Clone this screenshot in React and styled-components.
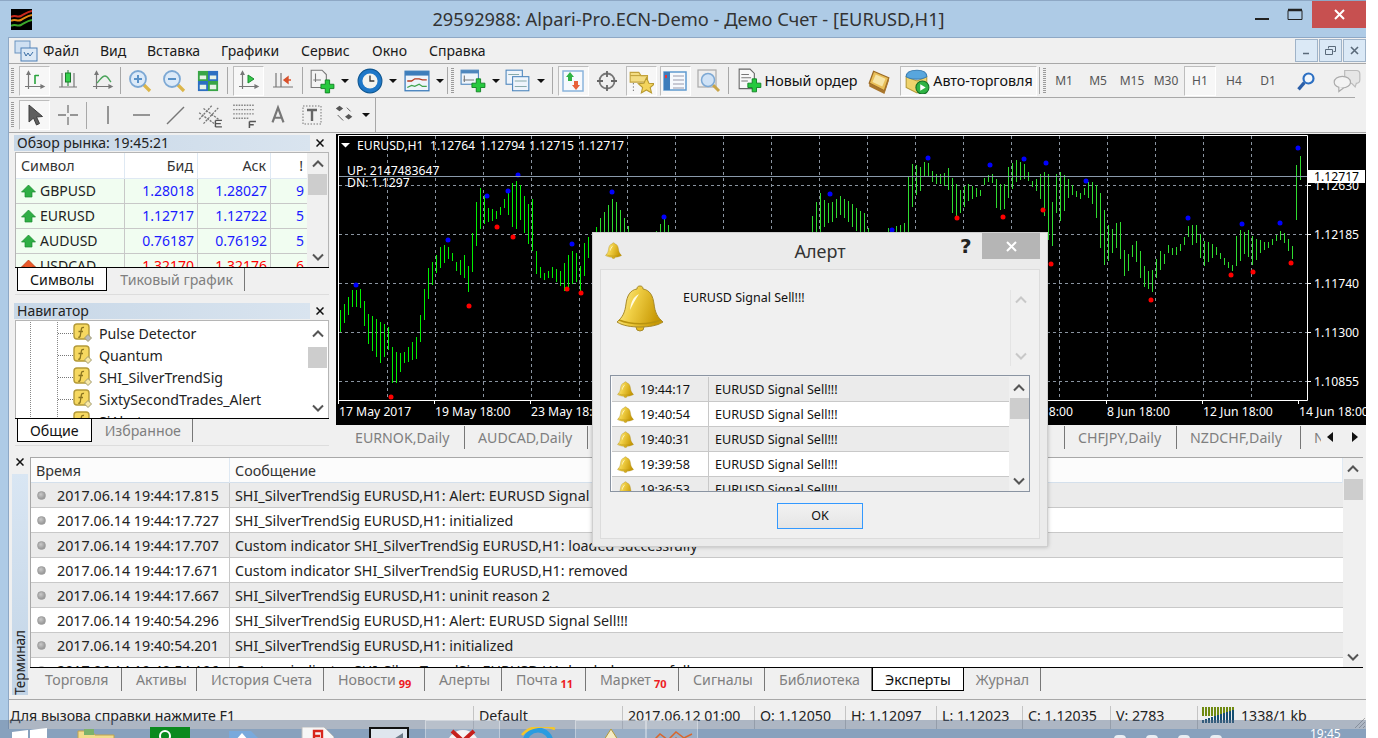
import React from "react";
import styled, { createGlobalStyle } from "styled-components";

const FONT = `"Noto Sans", "Open Sans", "Liberation Sans", sans-serif`;

const Global = createGlobalStyle`
  html, body { margin: 0; padding: 0; background: #fff; }
  body { font-family: ${FONT}; font-size: 14px; color: #111; }
`;

const Page = styled.div`
  position: relative;
  width: 1378px;
  height: 738px;
  overflow: hidden;
  background: #fff;
`;
const Win = styled.div`
  width: 1366px;
  height: 738px;
  box-sizing: border-box;
  padding: 0 0 9px 8px;
  background: #aecbe6;
  display: flex;
  flex-direction: column;
`;
const TitleBar = styled.div`
  height: 37px;
  flex: none;
  margin-left: -8px;
  border-top: 1px solid #8ea8c5;
  box-sizing: border-box;
  position: relative;
  display: flex;
  align-items: center;
  justify-content: center;
`;
const TitleText = styled.div`
  font-size: 18.25px;
  color: #333;
  margin: -1px 0 0 11px;
`;
const Logo = styled.svg`
  position: absolute;
  left: 11px;
  top: 8px;
`;
const WinButtons = styled.div`
  position: absolute;
  right: 0;
  top: 0;
  height: 27px;
  display: flex;
`;
const WinBtn = styled.div`
  width: ${(p) => p.w}px;
  height: 27px;
  margin-right: ${(p) => p.mr || 0}px;
  display: flex;
  align-items: center;
  justify-content: center;
  background: ${(p) => (p.close ? "#c75050" : "transparent")};
`;
const Client = styled.div`
  flex: 1;
  min-height: 0;
  background: #f0f0f0;
  border-top: 1px solid #8ea8c5;
  border-left: 1px solid #8ea8c5;
  display: flex;
  flex-direction: column;
`;
const MenuBar = styled.div`
  height: 25px;
  flex: none;
  display: flex;
  align-items: center;
  position: relative;
  padding-left: 5px;
`;
const MenuItem = styled.div`
  width: ${(p) => p.w}px;
  font-size: 14px;
  color: #1a1a1a;
`;
const MdiButtons = styled.div`
  position: absolute;
  right: 0;
  top: 1px;
  display: flex;
  gap: 1px;
`;
const MdiBtn = styled.div`
  width: 21px;
  height: 21px;
  border: 1px solid #9fb3c8;
  background: #dbe9f6;
  display: flex;
  align-items: center;
  justify-content: center;
`;
const ToolRow = styled.div`
  height: 33px;
  flex: none;
  border-top: 1px solid #a8a8a8;
  display: flex;
  align-items: center;
  margin-right: ${(p) => p.mr || 0}px;
`;
const ToolRow2 = styled(ToolRow)`
  height: 34px;
`;
const ToolLimit = styled.div`
  width: 366px;
  flex: none;
  height: 100%;
  display: flex;
  align-items: center;
  border-right: 1px solid #a8a8a8;
`;
const Grip = styled.div`
  width: 3px;
  height: 26px;
  margin: 0 ${(p) => p.mr ?? 5}px 0 ${(p) => p.ml ?? 2}px;
  flex: none;
  background: repeating-linear-gradient(#9a9a9a 0 1px, transparent 1px 2px);
`;
const Btn = styled.div`
  width: ${(p) => p.w || 31}px;
  height: 30px;
  flex: none;
  margin: 0 ${(p) => p.mx ?? 1.5}px;
  box-sizing: border-box;
  display: flex;
  align-items: center;
  justify-content: center;
  gap: ${(p) => p.gap ?? 4}px;
  font-size: 14.3px;
  white-space: nowrap;
  color: #111;
  border: 1px solid ${(p) => (p.active ? "#fff" : "transparent")};
  border-left-color: ${(p) => (p.active ? "#bdbdbd" : "transparent")};
  border-top-color: ${(p) => (p.active ? "#bdbdbd" : "transparent")};
  background: ${(p) => (p.active ? "#f7f7f7" : "transparent")};
`;
const TimeBtn = styled(Btn)`
  font-size: 12px;
  color: #555;
`;
const Drop = styled.div`
  width: 0;
  height: 0;
  border: 4px solid transparent;
  border-top: 4px solid #111;
  border-bottom: 0;
  margin-left: ${(p) => p.ml ?? 2}px;
`;
const Sep = styled.div`
  width: 1px;
  height: 27px;
  flex: none;
  background: #a8a8a8;
  margin: 0 ${(p) => p.r ?? 2}px 0 ${(p) => p.l ?? 2}px;
`;
const Main = styled.div`
  height: 317px;
  flex: none;
  display: flex;
  border-top: 1px solid #a8a8a8;
  box-sizing: border-box;
`;
const Dock = styled.div`
  width: 327px;
  flex: none;
  box-sizing: border-box;
  padding: 2px 7px 0 6px;
  display: flex;
  flex-direction: column;
  gap: 8px;
`;
const Panel = styled.div`
  height: ${(p) => p.h}px;
  flex: none;
  display: flex;
  flex-direction: column;
`;
const PanelHead = styled.div`
  height: 17px;
  flex: none;
  display: flex;
  align-items: flex-start;
  margin-left: -1px;
`;
const PanelTitle = styled.div`
  width: 296px;
  height: 16px;
  line-height: 15px;
  padding-left: 3px;
  box-sizing: border-box;
  font-size: 14px;
  color: #222;
  background: linear-gradient(90deg, #c7d7e7, #d9e4ef);
  white-space: nowrap;
`;
const CloseX = styled.div`
  width: 19px;
  height: 16px;
  flex: none;
  display: flex;
  align-items: center;
  justify-content: center;
`;
const PanelBody = styled.div`
  flex: 1;
  min-height: 0;
  display: flex;
  border: 1px solid #b5b5b5;
  border-bottom: 0;
  overflow: hidden;
  background: #fff;
`;
const PanelList = styled.div`
  flex: 1;
  min-width: 0;
  overflow: hidden;
  padding-top: ${(p) => p.pt || 0}px;
`;
const Scroll = styled.div`
  width: ${(p) => p.w || 21}px;
  flex: none;
  background: ${(p) => p.bg || "#f0f0f0"};
  display: flex;
  flex-direction: column;
  align-items: center;
  overflow: hidden;
`;
const ScrollCap = styled.div`
  height: ${(p) => p.h}px;
  width: 100%;
  flex: none;
  display: flex;
  align-items: center;
  justify-content: center;
`;
const Thumb = styled.div`
  width: 19px;
  height: 21px;
  flex: none;
  background: #cdcdcd;
`;
const Spacer = styled.div`
  flex: 1;
`;
const MarketGrid = styled.div`
  display: grid;
  grid-template-columns: 109px 73px 73px 37px;
`;
const HeadCell = styled.div`
  height: 25px;
  line-height: 26px;
  border-right: 1px solid #dfe9f3;
  border-bottom: 1px solid #dfe9f3;
  padding: 0 ${(p) => (p.right ? 4 : 0)}px 0 ${(p) => (p.right ? 0 : 5)}px;
  text-align: ${(p) => (p.right ? "right" : "left")};
  font-size: 14.2px;
  color: #333;
`;
const MarketCell = styled.div`
  height: 24px;
  line-height: 24px;
  background: #f1fdf1;
  border-right: 1px solid #c8c8c8;
  border-bottom: 1px solid #c8c8c8;
  padding-right: 3px;
  display: flex;
  align-items: center;
  justify-content: ${(p) => (p.sym ? "flex-start" : "flex-end")};
  gap: 4px;
  padding-left: ${(p) => (p.sym ? 5 : 0)}px;
  font-size: 14px;
  color: ${(p) => p.c || "#222"};
`;
const TabStrip = styled.div`
  height: ${(p) => p.h || 28}px;
  flex: none;
  border-top: 1px solid #000;
  box-sizing: border-box;
  display: flex;
  align-items: flex-start;
  padding-left: ${(p) => p.pl ?? 2}px;
  border-bottom: ${(p) => (p.line ? "1px solid #ddd" : "0")};
`;
const Tab = styled.div`
  height: 23px;
  line-height: 24px;
  flex: none;
  padding: 0 ${(p) => (p.active ? 12 : p.pr ?? 11)}px 0 ${(p) => (p.active ? 12 : p.pl ?? 11)}px;
  font-size: 14.2px;
  white-space: nowrap;
  overflow: hidden;
  box-sizing: border-box;
  color: ${(p) => (p.active ? "#111" : "#7f7f7f")};
  background: ${(p) => (p.active ? "#fff" : "transparent")};
  border: ${(p) => (p.active ? "1px solid #000" : "0")};
  border-top: 0;
  border-right: ${(p) => (p.active ? "1px solid #000" : p.flat ? "0" : "1px solid #777")};
  width: ${(p) => (p.w ? p.w + "px" : "auto")};
`;
const TabCount = styled.span`
  color: #ed1c24;
  font-size: 11px;
  font-weight: 700;
  margin-left: 3px;
  position: relative;
  top: 3px;
`;
const NavItem = styled.div`
  height: 22px;
  display: flex;
  align-items: center;
  font-size: 14.2px;
  color: #222;
  white-space: nowrap;
  background-image:
    linear-gradient(#888 50%, transparent 50%),
    linear-gradient(#888 50%, transparent 50%);
  background-size: 1px 2px, 1px 2px;
  background-repeat: repeat-y, repeat-y;
  background-position: 14px 0, 41px 0;
`;
const TreeLine = styled.div`
  width: 15px;
  margin-left: 42px;
  flex: none;
  border-top: 1px dotted #777;
`;
const NavIcon = styled.svg`
  margin-right: 6px;
  flex: none;
`;
const ChartPane = styled.div`
  flex: 1;
  min-width: 0;
  display: flex;
  flex-direction: column;
  padding-top: 1px;
`;
const ChartSvg = styled.svg`
  display: block;
  flex: none;
  background: #000;
  text {
    font-family: ${FONT};
    font-size: 12.2px;
    fill: #fff;
  }
`;
const ChartTabs = styled.div`
  flex: 1;
  display: flex;
  align-items: flex-start;
  padding: 1px 0 0 6px;
  position: relative;
  overflow: hidden;
`;
const ChartTabArrows = styled.div`
  position: absolute;
  right: 0;
  top: 0;
  bottom: 0;
  width: 45px;
  box-sizing: border-box;
  padding-left: 6px;
  background: #f0f0f0;
  display: flex;
  align-items: center;
  gap: 19px;
`;
const Terminal = styled.div`
  height: 250px;
  flex: none;
  display: flex;
`;
const TermSide = styled.div`
  width: 21px;
  flex: none;
  display: flex;
  flex-direction: column;
  align-items: center;
  padding-top: 5px;
  box-sizing: border-box;
`;
const TermStrip = styled.div`
  width: 16px;
  margin: 4px 0 4px;
  flex: 1;
  background: linear-gradient(#d9e6f3, #c2d4e6);
  display: flex;
  align-items: flex-end;
  justify-content: center;
`;
const TermLabel = styled.div`
  writing-mode: vertical-rl;
  transform: rotate(180deg);
  font-size: 13.5px;
  line-height: 16px;
  color: #222;
`;
const TermMain = styled.div`
  flex: 1;
  min-width: 0;
  display: flex;
  flex-direction: column;
  padding: 8px 3px 0 0;
`;
const TermTable = styled.div`
  height: 210px;
  flex: none;
  display: flex;
  border-top: 1px solid #a8a8a8;
  border-left: 1px solid #a8a8a8;
  box-sizing: border-box;
  overflow: hidden;
`;
const TermList = styled.div`
  flex: 1;
  min-width: 0;
  background: #fff;
`;
const TermHead = styled.div`
  height: 25px;
  box-sizing: border-box;
  display: grid;
  grid-template-columns: 199px 1fr;
  background: #fcfcfc;
  border-bottom: 1px solid #d4e0ec;
  font-size: 14.3px;
  line-height: 25px;
  color: #333;
`;
const TermHeadCell = styled.div`
  padding-left: ${(p) => p.pl}px;
  border-right: 1px solid #dfe9f3;
`;
const TermRow = styled.div`
  height: 25px;
  box-sizing: border-box;
  display: grid;
  grid-template-columns: 199px 1fr;
  background: ${(p) => (p.alt ? "#ebebeb" : "#fff")};
  border-bottom: 1px solid #c8c8c8;
  font-size: 14.3px;
  line-height: 25px;
  color: #222;
`;
const TermTime = styled.div`
  display: flex;
  align-items: center;
  gap: 11px;
  padding-left: 6px;
  border-right: 1px solid #c8c8c8;
`;
const Dot = styled.span`
  width: 9px;
  height: 9px;
  border-radius: 50%;
  flex: none;
  background: radial-gradient(circle at 40% 35%, #c9c9c9, #868686);
  border: 1px solid #a0a0a0;
  box-sizing: border-box;
`;
const TermMsg = styled.div`
  padding-left: 5px;
  white-space: nowrap;
`;
const Status = styled.div`
  flex: 1;
  border-top: 1px solid #a8a8a8;
  display: flex;
  padding-top: 6px;
  box-sizing: border-box;
  overflow: hidden;
  font-size: 14.2px;
  color: #222;
  position: relative;
`;
const StatusCell = styled.div`
  width: ${(p) => p.w}px;
  flex: none;
  height: 24px;
  line-height: 20px;
  box-sizing: border-box;
  padding-left: ${(p) => p.pl ?? 5}px;
  border-right: ${(p) => (p.last ? 0 : "1px solid #c4c4c4")};
  display: flex;
  gap: 5px;
  white-space: nowrap;
`;
const SizeGrip = styled.svg`
  position: absolute;
  right: 0;
  bottom: 0;
`;
const Dialog = styled.div`
  position: absolute;
  left: 592px;
  top: 232px;
  width: 456px;
  height: 315px;
  box-sizing: border-box;
  background: #ebebeb;
  border: 1px solid #cfcfcf;
  box-shadow: 0 0 4px rgba(0, 0, 0, 0.25);
  display: flex;
  flex-direction: column;
  padding: 0 7px 7px;
`;
const DialogHead = styled.div`
  height: 36px;
  flex: none;
  display: flex;
  align-items: flex-start;
  position: relative;
`;
const DialogTitle = styled.div`
  position: absolute;
  left: 0;
  right: 0;
  top: 6px;
  text-align: center;
  font-size: 18px;
  color: #333;
`;
const DialogBell = styled.div`
  margin: 9px 0 0 5px;
`;
const Help = styled.div`
  position: absolute;
  left: 360px;
  top: 1px;
  font: 700 20px "DejaVu Sans", sans-serif;
  color: #222;
`;
const DialogClose = styled.div`
  position: absolute;
  right: 0;
  top: 0;
  width: 58px;
  height: 26px;
  background: #b5b5b5;
  color: #fff;
  display: flex;
  align-items: center;
  justify-content: center;
`;
const DialogBody = styled.div`
  flex: 1;
  border: 1px solid #dcdcdc;
  background: #f0f0f0;
  display: flex;
  flex-direction: column;
  padding: 0 9px;
  min-height: 0;
`;
const DialogTop = styled.div`
  height: 105px;
  flex: none;
  display: flex;
  font-size: 12.5px;
  color: #111;
`;
const BigBell = styled.div`
  margin: 14px 0 0 6px;
  width: 67px;
  flex: none;
`;
const DialogMsg = styled.div`
  flex: 1;
  padding-top: 19px;
`;
const MsgScroll = styled.div`
  width: 20px;
  height: 76px;
  margin: 20px 0 0;
  border-left: 1px solid #e4e4e4;
  display: flex;
  flex-direction: column;
  align-items: center;
  justify-content: space-between;
  padding: 6px 0;
  box-sizing: border-box;
`;
const AlertBox = styled.div`
  height: 117px;
  flex: none;
  border: 1px solid #8a94a2;
  padding-top: 1px;
  box-sizing: border-box;
  display: flex;
  overflow: hidden;
  background: #f0f0f0;
`;
const AlertList = styled.div`
  flex: 1;
  min-width: 0;
  background: #fff;
  padding-left: 1px;
`;
const AlertRow = styled.div`
  height: 25px;
  box-sizing: border-box;
  display: grid;
  grid-template-columns: 97px 1fr;
  background: ${(p) => (p.alt ? "#ebebeb" : "#fff")};
  border-bottom: 1px solid #c8c8c8;
  font-size: 12.6px;
  line-height: 25px;
  color: #111;
`;
const AlertTime = styled.div`
  display: flex;
  align-items: center;
  gap: 6px;
  padding-left: 5px;
  border-right: 1px solid #c8c8c8;
`;
const AlertMsg = styled.div`
  padding-left: 6px;
`;
const OkRow = styled.div`
  display: flex;
  justify-content: center;
  padding-top: 11px;
`;
const OkBtn = styled.div`
  width: 86px;
  height: 26px;
  box-sizing: border-box;
  border: 1px solid #3399ff;
  background: linear-gradient(#f2f2f2, #e5e5e5);
  font-size: 12.5px;
  line-height: 24px;
  text-align: center;
  color: #111;
`;
const Taskbar = styled.div`
  position: absolute;
  left: 0;
  top: 720px;
  width: 1366px;
  height: 18px;
  background: rgba(90, 110, 140, 0.45);
  display: flex;
  overflow: hidden;
`;
const TaskSlot = styled.div`
  width: ${(p) => p.w}px;
  flex: none;
  height: 40px;
  box-sizing: border-box;
  padding-top: 7px;
  display: flex;
  justify-content: center;
  border: ${(p) => (p.on ? "1px solid rgba(255,255,255,.35)" : "0")};
  background: ${(p) => (p.on ? "rgba(255,255,255,.14)" : "transparent")};
`;
const Tray = styled.div`
  position: absolute;
  left: 1114px;
  top: 15px;
  display: flex;
  gap: 20px;
`;
const TrayDot = styled.div`
  width: 12px;
  height: 10px;
  border-radius: 4px 4px 0 0;
  background: #e8edf2;
`;
const Clock = styled.div`
  position: absolute;
  left: 1310px;
  top: 5px;
  font-size: 12px;
  color: #fff;
`;

/* ---------- icons ---------- */
const I = ({ s = 24, children, ...r }) => (
  <svg width={s} height={s} viewBox="0 0 24 24" fill="none" {...r}>
    {children}
  </svg>
);
const Axes = () => (
  <path d="M6.500 4v16M3 17.500h17M6.500 2.500 5 5.500h3zM22 17.500l-3-1.500v3z" stroke="#777" strokeWidth="1.200" fill="#777" />
);
const Plus = ({ x = 12, y = 12 }) => (
  <path
    transform={`translate(${x} ${y})`}
    d="M4 0h4v4h4v4H8v4H4V8H0V4h4z"
    fill="#27c93f"
    stroke="#0b7d1e"
    strokeWidth=".8"
  />
);
const Chevron = ({ down, c = "#555" }) => (
  <svg width="12" height="8" viewBox="0 0 12 8" fill="none">
    <path d={down ? "M1 1.500 6 6.500l5-5" : "M1 6.500 6 1.500l5 5"} stroke={c} strokeWidth="2" />
  </svg>
);
const Cross = () => (
  <svg width="8" height="8" viewBox="0 0 8 8">
    <path d="m.5.5 7 7M7.500.5l-7 7" stroke="#111" strokeWidth="1.500" />
  </svg>
);
const Bell = ({ s = 18 }) => (
  <svg width={s} height={s} viewBox="0 0 48 48" style={{ flex: "none" }}>
    <defs>
      <linearGradient id="bellG" x1="0" y1="0" x2="1" y2="0.3">
        <stop offset="0" stopColor="#fff3b0" />
        <stop offset=".45" stopColor="#f0cf45" />
        <stop offset="1" stopColor="#c99a06" />
      </linearGradient>
    </defs>
    <circle cx="24" cy="43" r="4" fill="#e5b91d" stroke="#a78a2a" strokeWidth="1" />
    <path
      d="M24 2c2 0 3 1 3 3 7 1 10 7 11 15 1 8 3 13 9 18-6 4-15 5-23 5S7 42 1 38c6-5 8-10 9-18 1-8 4-14 11-15 0-2 1-3 3-3z"
      fill="url(#bellG)"
      stroke="#a78a2a"
      strokeWidth="1"
    />
    <path d="M3 36c12 5 30 5 42 0" stroke="#b8930f" strokeWidth="1.400" fill="none" />
    <path d="M14 26c1-8 3-13 9-16-4 6-6 10-9 16z" fill="#fffbe0" />
  </svg>
);
const ArrowUp = () => (
  <svg width="15" height="14" viewBox="0 0 15 14" style={{ flex: "none" }}>
    <path d="M7.500 1 14.500 8H11v5H4V8H.5z" fill="#2fae45" stroke="#1b8a2e" strokeWidth=".7" />
  </svg>
);
const ArrowRed = () => (
  <svg width="15" height="14" viewBox="0 0 15 14" style={{ flex: "none" }}>
    <path d="M7.500 1 14.500 8H11v5H4V8H.5z" fill="#ea5a2a" stroke="#b23a12" strokeWidth=".7" />
  </svg>
);
const FuncIcon = ({ c = "#f6d860", d = "#f8e9a8" }) => (
  <NavIcon width="20" height="20" viewBox="0 0 20 20">
    <rect x="1" y="1" width="15" height="15" rx="3" fill={c} stroke="#b49a38" strokeWidth="1.400" />
    <path d="M11 4.500C9 4 8.500 5 8.200 7l-1 6c-.3 1.300-1 1.500-2 1M5.500 8.500h4.500" stroke="#8a7420" strokeWidth="1.300" fill="none" />
    <path d="M15 11.500l3.500 3.500-3.500 3.500-3.500-3.500z" fill={d} stroke="#a09a70" />
  </NavIcon>
);

const tools = {
  bars: (
    <I>
      <Axes />
      <path d="M13 15V6M13 6.500h4" stroke="#2aa43e" strokeWidth="1.600" />
    </I>
  ),
  candle: (
    <I>
      <path d="M6 4v14M3 18h18M18 4v14" stroke="#777" strokeWidth="1.200" />
      <path d="M12 1v16" stroke="#197a2a" />
      <rect x="9.500" y="4" width="5" height="9" fill="#35d04d" stroke="#197a2a" />
    </I>
  ),
  line: (
    <I>
      <Axes />
      <path d="M7 14c3-3 5-7 8-7s4 4 6 6" stroke="#4aa35a" strokeWidth="1.400" />
    </I>
  ),
  zoomIn: (
    <I s={24}>
      <path d="m15 15 7 7" stroke="#dcb64a" strokeWidth="3.200" />
      <circle cx="10" cy="10" r="8" fill="#dceaf8" stroke="#7ca8d4" strokeWidth="1.800" />
      <path d="M6 10h8M10 6v8" stroke="#5a92c8" strokeWidth="2" />
    </I>
  ),
  zoomOut: (
    <I s={24}>
      <path d="m15 15 7 7" stroke="#dcb64a" strokeWidth="3.200" />
      <circle cx="10" cy="10" r="8" fill="#dceaf8" stroke="#7ca8d4" strokeWidth="1.800" />
      <path d="M6 10h8" stroke="#5a92c8" strokeWidth="2" />
    </I>
  ),
  grid: (
    <I s={22}>
      <rect x="1" y="1" width="11" height="11" fill="#39a546" />
      <rect x="12" y="1" width="11" height="11" fill="#2c6fc2" />
      <rect x="1" y="12" width="11" height="11" fill="#2c6fc2" />
      <rect x="12" y="12" width="11" height="11" fill="#39a546" />
      <path d="M3 6h7v4H3zM14 6h7v4h-7zM3 16h7v5H3zM14 16h7v5h-7z" fill="#e6f2e6" />
    </I>
  ),
  play: (
    <I>
      <Axes />
      <path d="M12 6v8l6-4z" fill="#35c94c" stroke="#1b8a2e" />
    </I>
  ),
  shift: (
    <I>
      <path d="M5 4v14M2 18h20M10 4v14" stroke="#777" strokeWidth="1.200" />
      <path d="M13 11h7M13 11l4-3v6z" stroke="#d8502a" strokeWidth="1.400" fill="#d8502a" />
    </I>
  ),
  newChart: (
    <I s={26}>
      <path d="M2 2h10l4 4v12H2z" fill="#f4f4f4" stroke="#777" />
      <path d="M6 5v8M4 11h7" stroke="#777" />
      <Plus x={11} y={11} />
    </I>
  ),
  clock: (
    <I s={26}>
      <circle cx="12" cy="12" r="11" fill="#1e78c8" stroke="#0f568f" />
      <circle cx="12" cy="12" r="7" fill="#f4f4ee" />
      <path d="M12 7v5h4" stroke="#333" strokeWidth="1.200" />
    </I>
  ),
  template: (
    <I s={26}>
      <rect x="1" y="3" width="22" height="18" fill="#eef4fb" stroke="#3d7dbb" strokeWidth="1.200" />
      <rect x="1" y="3" width="22" height="4" fill="#3d7dbb" />
      <path d="M3 12h4l3-2h4l3 1h4" stroke="#b5391e" strokeWidth="1.200" />
      <path d="M3 18l4-2 3 1 4-2 3 2h4" stroke="#3ea34c" strokeWidth="1.200" />
    </I>
  ),
  addWin: (
    <I s={26}>
      <rect x="1" y="2" width="16" height="13" fill="#eef4fb" stroke="#4d86bd" />
      <rect x="1" y="2" width="16" height="3" fill="#4d86bd" />
      <path d="M4 7v6M3 11h10" stroke="#777" />
      <Plus x={11} y={10} />
    </I>
  ),
  profiles: (
    <I s={26}>
      <rect x="1" y="2" width="15" height="13" fill="#eef4fb" stroke="#4d86bd" />
      <rect x="7" y="8" width="15" height="13" fill="#eef4fb" stroke="#4d86bd" />
      <path d="M3 6h10M9 12h11M9 17h11" stroke="#8aa" />
    </I>
  ),
  updown: (
    <I s={24}>
      <rect x="2" y="2" width="20" height="20" fill="#f6f9fd" stroke="#8ab4dc" strokeWidth="1.500" />
      <path d="M9 3l4 5h-2v4H7V8H5z" fill="#2fb344" />
      <path d="M15 21l-4-5h2v-4h4v4h2z" fill="#e8623a" />
    </I>
  ),
  target: (
    <I s={24}>
      <circle cx="12" cy="12" r="7.500" stroke="#777" strokeWidth="1.800" />
      <path d="M12 2v6M12 16v6M2 12h6M16 12h6" stroke="#666" strokeWidth="1.800" />
    </I>
  ),
  star: (
    <I s={26}>
      <path d="M2 4h8l2 3h6v6H2z" fill="#f3dc82" stroke="#c2a23c" />
      <path d="M2 7h16" stroke="#c2a23c" />
      <path d="M5 14v8" stroke="#555" strokeDasharray="1 2" />
      <path d="m17 9 2.300 5 5.200.5-4 3.500 1.200 5-4.700-2.700-4.700 2.700 1.200-5-4-3.500 5.200-.5z" fill="#f3d45c" stroke="#b89a30" />
    </I>
  ),
  list: (
    <I s={24}>
      <rect x="1" y="3" width="22" height="18" fill="#f6f9fd" stroke="#5f9ad0" strokeWidth="1.500" />
      <rect x="1" y="3" width="6" height="18" fill="#3d7dbb" />
      <path d="M10 7h11M10 11h11M10 15h11M10 19h11" stroke="#99a" />
      <path d="M3 6v3" stroke="#e33" strokeWidth="2" />
    </I>
  ),
  search: (
    <I s={24}>
      <rect x="1" y="1" width="18" height="17" fill="#eee" stroke="#aaa" strokeWidth="1.200" />
      <path d="m16 16 6 6" stroke="#c9a548" strokeWidth="3" />
      <circle cx="11" cy="11" r="6.500" fill="#cfe2f6" stroke="#7ca8d4" strokeWidth="1.500" />
    </I>
  ),
  order: (
    <I s={26}>
      <path d="M2 1h10l4 4v14H2z" fill="#f8f8f8" stroke="#666" />
      <path d="M4 6h7M4 9h9M4 12h6" stroke="#777" />
      <Plus x={10} y={10} />
    </I>
  ),
  book: (
    <I s={26}>
      <path d="M7 3 21 9 17 21 3 14z" fill="#e9bf58" stroke="#9b6a24" strokeWidth="1.200" />
      <path d="M9 6l9 4-3 7-9-4z" fill="#f6e5a8" />
      <path d="M3 14l14 7 4-12v3l-4 12L3 17z" fill="#a9762c" />
    </I>
  ),
  auto: (
    <I s={26}>
      <path d="M2 8l10 4 9-4v11l-9 4-10-5z" fill="#efd36c" stroke="#b49a38" />
      <path d="M2 8c0-4 4-6 10-6s9 2 9 6c-4 3-15 3-19 0z" fill="#58a6dd" stroke="#3c7fb3" />
      <circle cx="17" cy="18" r="6" fill="#2fb344" stroke="#136e25" />
      <path d="M15 15v6l5-3z" fill="#fff" />
    </I>
  ),
  find: (
    <I s={20}>
      <path d="M3 22l7-8" stroke="#2c5fa8" strokeWidth="4" />
      <circle cx="15" cy="9" r="6" fill="#f2f7fc" stroke="#2c6fc2" strokeWidth="2.600" />
    </I>
  ),
  chat: (
    <I s={28}>
      <path d="M10 3h10a3 3 0 0 1 3 3v5a3 3 0 0 1-3 3l-1 3-3-3h-6z" fill="#e6e6e6" stroke="#bbb" />
      <ellipse cx="8" cy="13" rx="7" ry="5" fill="#f3f3f3" stroke="#aaa" />
      <path d="M5 17v4l4-3" fill="#f3f3f3" stroke="#aaa" />
    </I>
  ),
  cursor: (
    <I s={24}>
      <path d="M7 2v17l4.500-4 3 7 3-1.500-3-6.500 6-.5z" fill="#5f5f5f" stroke="#3f3f3f" />
    </I>
  ),
  cross: (
    <I>
      <path d="M12 2v8M12 14v8M2 12h8M14 12h8" stroke="#777" strokeWidth="1.300" />
    </I>
  ),
  vline: (
    <I>
      <path d="M12 3v18" stroke="#777" strokeWidth="1.500" />
    </I>
  ),
  hline: (
    <I>
      <path d="M3 12h17" stroke="#777" strokeWidth="1.500" />
    </I>
  ),
  diag: (
    <I>
      <path d="M3 21 20 4" stroke="#777" strokeWidth="1.500" />
    </I>
  ),
  channel: (
    <I s={26}>
      <path d="M2 16 14 3M6 20 20 5M2 10l14 10M6 6l14 10" stroke="#777" strokeWidth="1.200" strokeDasharray="2 1" />
      <path d="M17 17h6M17 20h5M17 23h6M17 17v6" stroke="#555" strokeWidth="1.300" />
    </I>
  ),
  fib: (
    <I s={26}>
      <path d="M2 3h19M2 7h19M2 11h19M2 15h14" stroke="#888" strokeWidth="1.200" strokeDasharray="1.500 1" />
      <path d="M17 18h6M17 21h4M17 18v6" stroke="#555" strokeWidth="1.400" />
    </I>
  ),
  letterA: (
    <I s={22}>
      <path d="M6 20 12 4l6 16M8 15h8" stroke="#777" strokeWidth="2.400" />
    </I>
  ),
  label: (
    <I>
      <rect x="3" y="3" width="18" height="18" stroke="#777" strokeDasharray="1.500 1.500" />
      <path d="M7 7h10M12 7v11" stroke="#666" strokeWidth="2.400" />
    </I>
  ),
  arrows: (
    <I s={22}>
      <path d="M6 2l4 3-4 3-4-3zM16 11l4 3-4 3-4-3z" fill="#555" />
      <path d="M4 12l6 6M14 4l4 4" stroke="#555" />
    </I>
  ),
};

/* ---------- chart data ---------- */
const KEYS = [
  [340, 310, 332], [352, 287, 310], [360, 287, 310], [368, 315, 343], [380, 325, 360], [388, 327, 350], [393, 350, 393],
  [403, 350, 367], [417, 337, 357], [420, 317, 340], [427, 273, 300], [435, 258, 273], [442, 242, 267], [450, 245, 260],
  [457, 262, 275], [465, 255, 277], [470, 277, 298], [473, 215, 255], [481, 187, 223], [488, 207, 223], [498, 208, 222],
  [505, 195, 208], [514, 180, 232], [520, 188, 217], [527, 208, 240], [532, 200, 250], [535, 247, 273], [542, 272, 283],
  [552, 265, 280], [562, 273, 287], [565, 260, 290], [575, 252, 277], [580, 267, 290], [585, 237, 273], [592, 233, 242],
  [600, 215, 250], [613, 199, 240], [620, 213, 250], [627, 226, 260], [635, 240, 270], [650, 240, 270], [660, 225, 260],
  [664, 217, 260], [668, 228, 260], [672, 260, 300], [806, 260, 300], [811, 223, 300], [815, 208, 260], [820, 195, 250],
  [825, 203, 220], [830, 202, 225], [840, 193, 218], [850, 202, 225], [858, 213, 230], [865, 217, 240], [870, 240, 300],
  [884, 240, 300], [887, 225, 300], [905, 225, 300], [909, 163, 232], [913, 168, 195], [920, 168, 190], [923, 162, 177],
  [928, 162, 177], [933, 170, 187], [943, 172, 187], [948, 168, 190], [953, 182, 217], [960, 193, 210], [967, 185, 200],
  [980, 188, 197], [982, 182, 193], [985, 172, 185], [992, 172, 185], [995, 177, 208], [1003, 190, 210], [1008, 170, 195],
  [1015, 162, 180], [1025, 163, 180], [1033, 180, 188], [1042, 170, 205], [1050, 177, 250], [1053, 218, 240], [1057, 163, 200],
  [1062, 182, 230], [1065, 175, 198], [1068, 180, 197], [1075, 187, 195], [1078, 192, 203], [1083, 187, 198], [1089, 178, 200],
  [1094, 183, 208], [1097, 187, 222], [1102, 200, 262], [1106, 225, 262], [1111, 233, 253], [1115, 227, 245], [1119, 215, 255],
  [1124, 248, 278], [1127, 253, 277], [1133, 240, 257], [1138, 238, 270], [1142, 262, 288], [1147, 272, 285], [1151, 275, 293],
  [1155, 267, 277], [1158, 252, 270], [1164, 255, 263], [1168, 245, 253], [1173, 247, 258], [1178, 243, 257], [1183, 237, 250],
  [1188, 225, 238], [1193, 225, 247], [1197, 227, 240], [1202, 243, 265], [1210, 245, 257], [1217, 247, 255], [1223, 255, 267],
  [1232, 262, 272], [1237, 227, 267], [1244, 233, 253], [1250, 233, 255], [1253, 242, 265], [1258, 242, 253], [1267, 242, 248],
  [1273, 235, 243], [1282, 227, 242], [1287, 237, 250], [1292, 247, 258], [1294, 185, 258], [1298, 150, 178], [1302, 167, 177],
];
const barsPath = (from, to) => {
  let d = "";
  for (let x = 340; x <= 1302; x += 4) {
    if (x < from || x >= to) continue;
    let i = KEYS.findIndex((k) => k[0] >= x);
    if (i < 1) i = 1;
    const [x0, h0, l0] = KEYS[i - 1];
    const [x1, h1, l1] = KEYS[i];
    const t = Math.min(1, (x - x0) / (x1 - x0 || 1));
    const j = Math.sin(x * 1.7) * 3;
    const hi = Math.round(h0 + (h1 - h0) * t + j);
    const lo = Math.round(l0 + (l1 - l0) * t - j);
    d += `M${x + 0.5} ${hi}V${Math.max(lo, hi + 6)}`;
  }
  return d;
};
const BLUE = [[356, 285], [448, 240], [487, 196], [508, 191], [518, 175], [572, 244], [612, 192], [664, 217], [830, 194], [892, 230], [928, 158], [990, 165], [1024, 159], [1046, 163], [1086, 181], [1188, 218], [1242, 224], [1280, 223], [1298, 148]];
const RED = [[391, 397], [469, 306], [497, 227], [513, 237], [567, 289], [581, 293], [957, 218], [1003, 217], [1043, 210], [1051, 264], [1151, 300], [1231, 275], [1253, 272], [1291, 263]];
const V_GRID = Array.from({ length: 19 }, (_, i) => 387 + i * 48);
const H_GRID = [185, 234, 283, 332, 381];
const PRICES = [["1.12630", 190], ["1.12185", 239], ["1.11740", 288], ["1.11300", 337], ["1.10855", 386]];
const DATES = [["17 May 2017", 339], ["19 May 18:00", 435], ["23 May 18:00", 531], ["6 Jun 18:00", 1010], ["8 Jun 18:00", 1107], ["12 Jun 18:00", 1203], ["14 Jun 18:00", 1299]];
const QUOTES = [["EURUSD,H1", 357], ["1.12764", 430], ["1.12794", 480], ["1.12715", 529], ["1.12717", 579]];

const Chart = () => (
  <ChartSvg width="1030" height="291" viewBox="336 134 1030 291">
    <path d={V_GRID.map((x) => `M${x + 0.5} 136V400`).join("")} stroke="#8a94a0" strokeDasharray="3 3" />
    <path d={H_GRID.map((y) => `M339 ${y + 0.5}H1307`).join("")} stroke="#8a94a0" strokeDasharray="3 3" />
    <path d={barsPath(0, 600)} stroke="#00f000" />
    <path d={barsPath(600, 2000)} stroke="#2fdc2f" />
    {BLUE.map(([x, y]) => (
      <circle key={x} cx={x} cy={y} r="2.500" fill="#0000ff" />
    ))}
    {RED.map(([x, y]) => (
      <circle key={x} cx={x} cy={y} r="2.500" fill="#ff0000" />
    ))}
    <path d="M338.500 400.500V135.500H1307.500V400.500H338.500" stroke="#fff" fill="none" />
    <path d="M339 176.500H1307" stroke="#8a9aac" />
    <path d="M341 143h9l-4.500 4.500z" fill="#fff" />
    {QUOTES.map(([t, x]) => (
      <text key={x} x={x} y="150">
        {t}
      </text>
    ))}
    <text x="347" y="175">UP: 2147483647</text>
    <text x="347" y="187">DN: 1.1297</text>
    {H_GRID.map((y) => (
      <path key={y} d={`M1307 ${y + 0.5}h4`} stroke="#fff" />
    ))}
    {PRICES.map(([t, y]) => (
      <text key={t} x="1314" y={y}>
        {t}
      </text>
    ))}
    <rect x="1308" y="170" width="57" height="13" fill="#fff" />
    <text x="1314" y="181" style={{ fill: "#000" }}>
      1.12717
    </text>
    {DATES.map(([t, x]) => (
      <g key={t}>
        <path d={`M${x - 0.5} 400v4`} stroke="#fff" />
        <text x={x} y="416">
          {t}
        </text>
      </g>
    ))}
  </ChartSvg>
);

/* ---------- content ---------- */
const MENU = [["Файл", 57], ["Вид", 47], ["Вставка", 74], ["Графики", 80], ["Сервис", 71], ["Окно", 57], ["Справка", 80]];
const MARKET = [
  ["GBPUSD", "1.28018", "1.28027", "9", "#1a1aff"],
  ["EURUSD", "1.12717", "1.12722", "5", "#1a1aff"],
  ["AUDUSD", "0.76187", "0.76192", "5", "#1a1aff"],
  ["USDCAD", "1.32170", "1.32176", "6", "#ff0000"],
];
const NAV = ["Pulse Detector", "Quantum", "SHI_SilverTrendSig", "SixtySecondTrades_Alert", "SiAlert"];
const CHART_TABS = [
  ["EURNOK,Daily", 123],
  ["AUDCAD,Daily", 123],
  ["GBPUSD,Daily", 119],
  ["EURGBP,Daily", 119],
  ["AUDNZD,Daily", 119],
  ["NZDJPY,Daily", 120],
  ["CHFJPY,Daily", 112],
  ["NZDCHF,Daily", 124],
  ["NZDUSD,Daily", 124],
];
const LOG = [
  ["2017.06.14 19:44:17.815", "SHI_SilverTrendSig EURUSD,H1: Alert: EURUSD Signal Sell!!!"],
  ["2017.06.14 19:44:17.727", "SHI_SilverTrendSig EURUSD,H1: initialized"],
  ["2017.06.14 19:44:17.707", "Custom indicator SHI_SilverTrendSig EURUSD,H1: loaded successfully"],
  ["2017.06.14 19:44:17.671", "Custom indicator SHI_SilverTrendSig EURUSD,H1: removed"],
  ["2017.06.14 19:44:17.667", "SHI_SilverTrendSig EURUSD,H1: uninit reason 2"],
  ["2017.06.14 19:40:54.296", "SHI_SilverTrendSig EURUSD,H1: Alert: EURUSD Signal Sell!!!"],
  ["2017.06.14 19:40:54.201", "SHI_SilverTrendSig EURUSD,H1: initialized"],
  ["2017.06.14 19:40:54.196", "Custom indicator SHI_SilverTrendSig EURUSD,H1: loaded successfully"],
];
const TERM_TABS = [
  ["Торговля", 0, 92],
  ["Активы", 0, 75],
  ["История Счета", 0, 127],
  ["Новости", "99", 101],
  ["Алерты", 0, 77],
  ["Почта", "11", 84],
  ["Маркет", "70", 93],
  ["Сигналы", 0, 86],
  ["Библиотека", 0, 107],
];
const ALERTS = ["19:44:17", "19:40:54", "19:40:31", "19:39:58", "19:36:53"];
const STATUS = [
  ["Для вызова справки нажмите F1", 465, 1],
  ["Default", 149],
  ["2017.06.12 01:00", 132],
  ["O: 1.12050", 91],
  ["H: 1.12097", 91],
  ["L: 1.12023", 86],
  ["C: 1.12035", 88],
  ["V: 2783", 87],
];

const ScrollBar = ({ top, w, bg }) => (
  <Scroll w={w} bg={bg}>
    <ScrollCap h={top}>
      <Chevron />
    </ScrollCap>
    <Thumb />
    <Spacer />
    <ScrollCap h={21}>
      <Chevron down />
    </ScrollCap>
  </Scroll>
);

const NetBars = () => (
  <svg width="34" height="18" viewBox="0 0 34 18">
    {Array.from({ length: 11 }, (_, i) => (
      <g key={i}>
        <rect x={i * 3} y="1" width="2" height={9} fill="#6f8a10" />
        <rect x={i * 3} y={14 - i} width="2" height={3 + i} fill="#164f72" />
      </g>
    ))}
  </svg>
);

const TaskIcons = [
  [60, 0, <svg width="36" height="36" viewBox="0 0 36 36"><path d="M18 3 35 1v16H18zM0 5l16-2v14H0zM0 19h16v14L0 31zM18 19h17v16l-17-2z" fill="#fff" /></svg>],
  [72, 0, <svg width="40" height="36" viewBox="0 0 40 36"><path d="M2 4h14l3 4h19v24H2z" fill="#f2dc8d" stroke="#c0a24e" /><path d="M8 2h10v6H8z" fill="#7cb26a" /></svg>],
  [75, 0, <svg width="40" height="36" viewBox="0 0 40 36"><rect width="40" height="36" fill="#0a8a1e" /><circle cx="15" cy="9" r="5" fill="none" stroke="#fff" strokeWidth="2" /></svg>],
  [73, 0, <svg width="38" height="36" viewBox="0 0 38 36"><path d="M4 4h22l12 12v20H4z" fill="#79a9dc" /><path d="M17 6 10 14h14z" fill="#fff" /></svg>],
  [73, 0, <svg width="34" height="36" viewBox="0 0 34 36"><path d="M2 0h22l10 10v26H2z" fill="#f6f6f6" stroke="#bbb" /><path d="M14 4h8v10h-8zM14 9h6" stroke="#d8261c" strokeWidth="2.400" fill="none" /></svg>],
  [72, 0, <svg width="40" height="36" viewBox="0 0 40 36"><rect x="1" y="1" width="38" height="34" fill="#dfe6ee" stroke="#111" strokeWidth="2" /><path d="M6 24 34 6v18z" fill="#6c7a88" /></svg>],
  [75, 1, <svg width="34" height="36" viewBox="0 0 34 36"><circle cx="17" cy="18" r="16" fill="#f4f4f4" /><path d="M6 3l22 20M28 3 6 23" stroke="#c6201c" strokeWidth="4" /></svg>],
  [75, 0, <svg width="38" height="36" viewBox="0 0 38 36"><circle cx="19" cy="16" r="13" fill="none" stroke="#2a9ce0" strokeWidth="5" /><path d="M3 8c8-10 24-10 33-6" stroke="#f2c62c" strokeWidth="2.500" fill="none" /></svg>],
  [71, 1, <svg width="30" height="36" viewBox="0 0 30 36"><path d="M15 1l14 22H1z" fill="#f5ebc6" stroke="#b49a38" /><circle cx="16" cy="15" r="5" fill="#3b8f3f" /></svg>],
  [52, 1, <svg width="44" height="36" viewBox="0 0 44 36"><path d="M2 14 10 6l8 6 8-8 8 6 8-4M2 20l8-8 8 6 8-8 8 6 8-4" stroke="#d9662c" strokeWidth="1.500" fill="none" /></svg>],
];

export default function App() {
  return (
    <Page>
      <Global />
      <Win>
        <TitleBar>
          <Logo width="21" height="21" viewBox="0 0 21 21">
            <rect width="21" height="21" fill="#000" />
            <path d="M0 8c4-3 6 1 10-1s6-4 11-5" stroke="#c8281c" strokeWidth="2" fill="none" />
            <path d="M0 12c4-3 6 1 10-1s6-4 11-5" stroke="#e08a14" strokeWidth="2" fill="none" />
            <path d="M0 17c4-3 6 1 10-1s6-4 11-5" stroke="#3ca82a" strokeWidth="2" fill="none" />
          </Logo>
          <TitleText>29592988: Alpari-Pro.ECN-Demo - Демо Счет - [EURUSD,H1]</TitleText>
          <WinButtons>
            <WinBtn w={33} mr={4}>
              <svg width="14" height="10" viewBox="0 0 14 10"><path d="M0 9h14" stroke="#222" strokeWidth="2" /></svg>
            </WinBtn>
            <WinBtn w={25} mr={5}>
              <svg width="16" height="14" viewBox="0 0 16 14"><path d="M1 2.500h14v9H1z" fill="none" stroke="#222" /><path d="M1 2h14" stroke="#222" strokeWidth="2.500" /></svg>
            </WinBtn>
            <WinBtn w={54} close>
              <svg width="11" height="11" viewBox="0 0 11 11"><path d="m1 1 9 9M10 1l-9 9" stroke="#fff" strokeWidth="2" /></svg>
            </WinBtn>
          </WinButtons>
        </TitleBar>
        <Client>
          <MenuBar>
            <svg width="24" height="22" viewBox="0 0 24 22" style={{ marginRight: 5, flex: "none" }}>
              <rect x="1" y="1" width="15" height="12" fill="#cfe0f2" stroke="#6a93bf" />
              <rect x="7" y="8" width="16" height="13" fill="#dbe8f5" stroke="#4d7fb5" />
              <path d="M10 12l2 4 2-3 2 3 3-4" stroke="#3a6ea5" fill="none" />
            </svg>
            {MENU.map(([t, w]) => (
              <MenuItem key={t} w={w}>
                {t}
              </MenuItem>
            ))}
            <MdiButtons>
              <MdiBtn>
                <svg width="9" height="9" viewBox="0 0 9 9"><path d="M1 7.500h6" stroke="#5a6a7a" strokeWidth="1.500" /></svg>
              </MdiBtn>
              <MdiBtn>
                <svg width="11" height="10" viewBox="0 0 11 10"><path d="M3.500 2.500V.5h7v5h-2M.5 3.500h7v5h-7z" stroke="#5a6a7a" fill="none" /></svg>
              </MdiBtn>
              <MdiBtn>
                <svg width="9" height="9" viewBox="0 0 9 9"><path d="m1 1 7 7M8 1 1 8" stroke="#5a6a7a" strokeWidth="1.600" /></svg>
              </MdiBtn>
            </MdiButtons>
          </MenuBar>
          <ToolRow>
            <Grip ml={2} mr={3} />
            <Btn active>{tools.bars}</Btn>
            <Btn>{tools.candle}</Btn>
            <Btn>{tools.line}</Btn>
            <Sep l={1} r={2} />
            <Btn>{tools.zoomIn}</Btn>
            <Btn>{tools.zoomOut}</Btn>
            <Btn>{tools.grid}</Btn>
            <Sep l={2} r={3} />
            <Btn active>{tools.play}</Btn>
            <Btn w={33}>{tools.shift}</Btn>
            <Sep l={1} r={2} />
            <Btn w={48} mx={0}>{tools.newChart}<Drop /></Btn>
            <Btn w={48} mx={0}>{tools.clock}<Drop /></Btn>
            <Btn w={46} mx={0}>{tools.template}<Drop /></Btn>
            <Sep l={0} r={0} />
            <Grip ml={3} mr={3} />
            <Btn w={46} mx={0}>{tools.addWin}<Drop /></Btn>
            <Btn w={44} mx={0}>{tools.profiles}<Drop /></Btn>
            <Sep l={5} r={3} />
            <Btn active>{tools.updown}</Btn>
            <Btn>{tools.target}</Btn>
            <Btn active>{tools.star}</Btn>
            <Btn active>{tools.list}</Btn>
            <Btn>{tools.search}</Btn>
            <Sep l={2} r={5} />
            <Btn w={126} mx={0} gap={2}>{tools.order}Новый ордер</Btn>
            <Btn w={38} mx={0}>{tools.book}</Btn>
            <Btn active w={137} mx={2} gap={3}>{tools.auto}Авто-торговля</Btn>
            <Sep l={0} r={0} />
            <Grip ml={3} mr={1} />
            <TimeBtn w={32} mx={1}>M1</TimeBtn>
            <TimeBtn w={32} mx={1}>M5</TimeBtn>
            <TimeBtn w={32} mx={1}>M15</TimeBtn>
            <TimeBtn w={32} mx={1}>M30</TimeBtn>
            <TimeBtn w={32} mx={1} active>H1</TimeBtn>
            <TimeBtn w={32} mx={1}>H4</TimeBtn>
            <TimeBtn w={32} mx={1}>D1</TimeBtn>
            <Btn w={36} mx={3}>{tools.find}</Btn>
            <Btn w={40} mx={0}>{tools.chat}</Btn>
          </ToolRow>
          <ToolRow2 mr={11}>
            <ToolLimit>
              <Grip ml={2} mr={3} />
              <Btn active>{tools.cursor}</Btn>
              <Btn>{tools.cross}</Btn>
              <Sep l={1} r={4} />
              <Btn>{tools.vline}</Btn>
              <Btn>{tools.hline}</Btn>
              <Btn>{tools.diag}</Btn>
              <Btn>{tools.channel}</Btn>
              <Btn>{tools.fib}</Btn>
              <Btn>{tools.letterA}</Btn>
              <Btn>{tools.label}</Btn>
              <Btn w={42}>{tools.arrows}<Drop /></Btn>
            </ToolLimit>
          </ToolRow2>
          <Main>
            <Dock>
              <Panel h={160}>
                <PanelHead>
                  <PanelTitle>Обзор рынка: 19:45:21</PanelTitle>
                  <CloseX><Cross /></CloseX>
                </PanelHead>
                <PanelBody>
                  <PanelList>
                    <MarketGrid>
                      <HeadCell>Символ</HeadCell>
                      <HeadCell right>Бид</HeadCell>
                      <HeadCell right>Аск</HeadCell>
                      <HeadCell right>!</HeadCell>
                      {MARKET.map(([s, b, a, d, c]) => (
                        <React.Fragment key={s}>
                          <MarketCell sym>
                            {c === "#ff0000" ? <ArrowRed /> : <ArrowUp />}
                            {s}
                          </MarketCell>
                          <MarketCell c={c}>{b}</MarketCell>
                          <MarketCell c={c}>{a}</MarketCell>
                          <MarketCell c={c}>{d}</MarketCell>
                        </React.Fragment>
                      ))}
                    </MarketGrid>
                  </PanelList>
                  <ScrollBar top={21} />
                </PanelBody>
                <TabStrip line>
                  <Tab active>Символы</Tab>
                  <Tab pl={13}>Тиковый график</Tab>
                </TabStrip>
              </Panel>
              <Panel h={143}>
                <PanelHead>
                  <PanelTitle>Навигатор</PanelTitle>
                  <CloseX><Cross /></CloseX>
                </PanelHead>
                <PanelBody>
                  <PanelList pt={1}>
                    {NAV.map((t, i) => (
                      <NavItem key={t}>
                        <TreeLine />
                        <FuncIcon d={i === 0 ? "#b9b9b9" : "#f8e9a8"} />
                        {t}
                      </NavItem>
                    ))}
                  </PanelList>
                  <ScrollBar top={26} bg="#fff" />
                </PanelBody>
                <TabStrip line>
                  <Tab active>Общие</Tab>
                  <Tab pl={13}>Избранное</Tab>
                </TabStrip>
              </Panel>
            </Dock>
            <ChartPane>
              <Chart />
              <ChartTabs>
                {CHART_TABS.map(([t, w]) => (
                  <Tab key={t} w={w} pl={13} pr={0}>
                    {t}
                  </Tab>
                ))}
                <ChartTabArrows>
                  <svg width="6" height="10" viewBox="0 0 6 10"><path d="M6 0v10L0 5z" fill="#111" /></svg>
                  <svg width="6" height="10" viewBox="0 0 6 10"><path d="M0 0v10l6-5z" fill="#111" /></svg>
                </ChartTabArrows>
              </ChartTabs>
            </ChartPane>
          </Main>
          <Terminal>
            <TermSide>
              <CloseX><Cross /></CloseX>
              <TermStrip>
                <TermLabel>Терминал</TermLabel>
              </TermStrip>
            </TermSide>
            <TermMain>
              <TermTable>
                <TermList>
                  <TermHead>
                    <TermHeadCell pl={5}>Время</TermHeadCell>
                    <TermHeadCell pl={5}>Сообщение</TermHeadCell>
                  </TermHead>
                  {LOG.map(([t, m], i) => (
                    <TermRow key={t} alt={i % 2 === 0}>
                      <TermTime>
                        <Dot />
                        {t}
                      </TermTime>
                      <TermMsg>{m}</TermMsg>
                    </TermRow>
                  ))}
                </TermList>
                <ScrollBar top={21} w={20} />
              </TermTable>
              <TabStrip pl={0} h={30}>
                {TERM_TABS.map(([t, n, w], i) => (
                  <Tab key={t} w={w} pl={i === 0 ? 15 : 14} pr={0}>
                    {t}
                    {n ? <TabCount>{n}</TabCount> : null}
                  </Tab>
                ))}
                <Tab active>Эксперты</Tab>
                <Tab pl={12}>Журнал</Tab>
              </TabStrip>
            </TermMain>
          </Terminal>
          <Status>
            {STATUS.map(([t, w, pl]) => (
              <StatusCell key={t} w={w} pl={pl}>
                {t}
              </StatusCell>
            ))}
            <StatusCell w={150} pl={4} last>
              <NetBars />
              1338/1 kb
            </StatusCell>
            <SizeGrip width="12" height="12" viewBox="0 0 12 12">
              <path d="M11 1 1 11M11 5l-6 6M11 9l-2 2" stroke="#aaa" />
            </SizeGrip>
          </Status>
        </Client>
      </Win>
      <Taskbar>
        {TaskIcons.map(([w, on, icon], i) => (
          <TaskSlot key={i} w={w} on={on ? 1 : 0}>
            {icon}
          </TaskSlot>
        ))}
        <Tray>
          <TrayDot />
          <TrayDot />
          <TrayDot />
          <TrayDot />
        </Tray>
        <Clock>19:45</Clock>
      </Taskbar>
      <Dialog>
        <DialogHead>
          <DialogBell>
            <Bell s={17} />
          </DialogBell>
          <DialogTitle>Алерт</DialogTitle>
          <Help>?</Help>
          <DialogClose>
            <svg width="11" height="11" viewBox="0 0 11 11"><path d="m1 1 9 9M10 1l-9 9" stroke="#fff" strokeWidth="2" /></svg>
          </DialogClose>
        </DialogHead>
        <DialogBody>
          <DialogTop>
            <BigBell>
              <Bell s={48} />
            </BigBell>
            <DialogMsg>EURUSD Signal Sell!!!</DialogMsg>
            <MsgScroll>
              <Chevron c="#c8c8c8" />
              <Chevron down c="#c8c8c8" />
            </MsgScroll>
          </DialogTop>
          <AlertBox>
            <AlertList>
              {ALERTS.map((t, i) => (
                <AlertRow key={t} alt={i % 2 === 0}>
                  <AlertTime>
                    <Bell s={17} />
                    {t}
                  </AlertTime>
                  <AlertMsg>EURUSD Signal Sell!!!</AlertMsg>
                </AlertRow>
              ))}
            </AlertList>
            <ScrollBar top={21} w={20} />
          </AlertBox>
          <OkRow>
            <OkBtn>OK</OkBtn>
          </OkRow>
        </DialogBody>
      </Dialog>
    </Page>
  );
}
